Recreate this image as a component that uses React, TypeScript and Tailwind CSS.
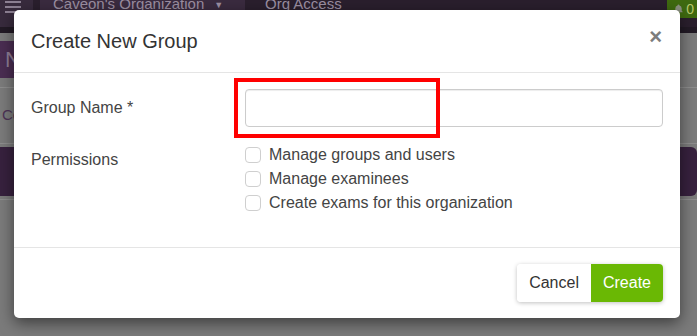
import { useState } from "react";

const permissions = [
  "Manage groups and users",
  "Manage examinees",
  "Create exams for this organization",
];

function Backdrop() {
  return (
    <div className="flex h-full flex-col bg-[#7b7b7b]">
      <nav className="flex h-[27px] bg-[#2a1f2d] text-[15px] leading-none text-[#9c8fa2]">
        <div className="flex w-[33px] flex-col gap-[3px] bg-[#382b3d] px-[5px] pt-[1px]">
          <span className="h-[2px] w-[16px] bg-[#8d8193]" />
          <span className="h-[2px] w-[16px] bg-[#8d8193]" />
          <span className="h-[2px] w-[16px] bg-[#8d8193]" />
        </div>
        <div className="ml-[7px] flex w-[205px] items-start bg-[#3a2b3f] pl-[13px]">
          <span className="-mt-[4px]">Caveon's Organization</span>
          <span className="ml-[10px] mt-[1px] text-[9px]">▼</span>
        </div>
        <div className="ml-[20px] -mt-[4px]">Org Access</div>
        <div className="ml-auto flex h-[18px] items-center gap-[2px] rounded-bl-[9px] bg-[#3f6a10] pl-[6px] pr-[3px]">
          <svg width="11" height="12" viewBox="0 0 24 24" fill="#8a8f80">
            <path d="M12 2a2 2 0 0 0-2 2v.3A7 7 0 0 0 5 11v5l-2 2v1h18v-1l-2-2v-5a7 7 0 0 0-5-6.7V4a2 2 0 0 0-2-2zm-2 18a2 2 0 0 0 4 0z" />
          </svg>
          <span className="text-[14px] text-[#b9c86a]">0</span>
        </div>
      </nav>
      <div className="h-[6px] bg-[#221a25]" />
      <div className="h-[8px]" />
      <div className="flex h-[37px] w-[300px] items-center bg-[#4a2d52] pl-[5px] text-[22px] text-[#8f7d95]">
        N
      </div>
      <div className="h-[10px] border-b border-[#8d8d8d]" />
      <div className="flex h-[56px] items-center border-b border-[#8d8d8d] pl-[2px] text-[15px] text-[#4d3356]">
        Co
      </div>
      <div className="mt-[3px] h-[49px] rounded-r-[6px] bg-[#37213e]" />
      <div className="mt-[3px] border-b border-[#8d8d8d]" />
    </div>
  );
}

export default function App() {
  const [name, setName] = useState("");
  const [checked, setChecked] = useState<boolean[]>([false, false, false]);

  return (
    <div className="relative h-[336px] w-[697px] overflow-hidden font-['Liberation_Sans',Arial,sans-serif]">
      <Backdrop />

      <div className="absolute left-[14px] top-[10px] w-[666px] rounded-[5px] bg-white shadow-[0_5px_15px_rgba(0,0,0,0.5)]">
        <div className="flex h-[63px] items-center justify-between border-b border-[#e5e5e5] pl-[17px] pr-[18px]">
          <h4 className="text-[20px] text-[#333]">Create New Group</h4>
          <button
            type="button"
            className="-mt-[8px] text-[22px] font-bold leading-none text-[#7d7d7d]"
          >
            ×
          </button>
        </div>

        <div className="px-[17px] pb-[32px] pt-[16px]">
          <div className="flex items-center">
            <label className="w-[214px] text-[16px] text-[#444]">Group Name *</label>
            <input
              value={name}
              onChange={(e) => setName(e.target.value)}
              className="h-[38px] flex-1 rounded-[4px] border border-[#cccccc] px-3 text-[16px] shadow-[inset_0_1px_1px_rgba(0,0,0,0.075)] outline-none"
            />
          </div>

          <div className="mt-[16px] flex">
            <label className="w-[214px] pt-[6px] text-[16px] leading-[22px] text-[#444]">
              Permissions
            </label>
            <div className="flex flex-col">
              {permissions.map((p, i) => (
                <label
                  key={p}
                  className="flex h-[24px] items-center gap-[8px] text-[16px] text-[#444]"
                >
                  <span
                    onClick={() =>
                      setChecked((c) => c.map((v, j) => (j === i ? !v : v)))
                    }
                    className={`h-[16px] w-[16px] rounded-[4px] border border-[#cfcfcf] ${checked[i] ? "bg-[#6cb804]" : "bg-white"}`}
                  />
                  {p}
                </label>
              ))}
            </div>
          </div>
        </div>

        <div className="flex justify-end border-t border-[#e5e5e5] px-[17px] py-[16px]">
          <div className="flex overflow-hidden rounded-[4px] shadow-[0_1px_4px_rgba(0,0,0,0.25)]">
            <button
              type="button"
              className="h-[38px] bg-white px-[12px] text-[16px] text-[#333]"
            >
              Cancel
            </button>
            <button
              type="button"
              className="h-[38px] bg-[#6ab804] px-[12px] text-[16px] text-white"
            >
              Create
            </button>
          </div>
        </div>

        <div className="pointer-events-none absolute left-[220px] top-[68px] h-[60px] w-[206px] border-4 border-[#ff0000]" />
      </div>
    </div>
  );
}
